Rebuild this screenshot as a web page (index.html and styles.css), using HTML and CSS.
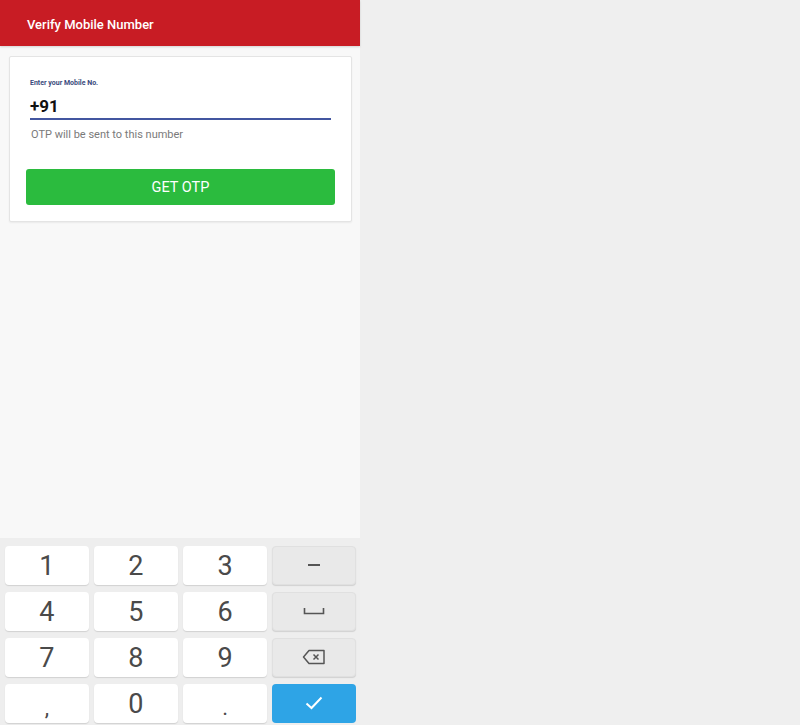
FILE: index.html
```html
<!DOCTYPE html>
<html>
<head>
<meta charset="utf-8">
<link rel="stylesheet" href="styles.css">
</head>
<body>
<div class="app">
  <header class="topbar">Verify Mobile Number</header>
  <main class="content">
    <section class="card">
      <div class="field-label">Enter your Mobile No.</div>
      <div class="field-input">+91</div>
      <div class="field-help">OTP will be sent to this number</div>
      <button class="otp-btn">GET OTP</button>
    </section>
  </main>
  <div class="keyboard">
    <div class="key">1</div>
    <div class="key">2</div>
    <div class="key">3</div>
    <div class="key fn"><span class="dash"></span></div>
    <div class="key">4</div>
    <div class="key">5</div>
    <div class="key">6</div>
    <div class="key fn">
      <svg width="22" height="8" viewBox="0 0 22 8"><path d="M1.5 1 V6.5 H20.5 V1" fill="none" stroke="#555" stroke-width="1.6"/></svg>
    </div>
    <div class="key">7</div>
    <div class="key">8</div>
    <div class="key">9</div>
    <div class="key fn">
      <svg width="24" height="16" viewBox="0 0 24 16"><path d="M7 1.5 H22 V14.5 H7 L1.5 8 Z" fill="none" stroke="#555" stroke-width="1.5" stroke-linejoin="round"/><path d="M11.5 5.5 L16.5 10.5 M16.5 5.5 L11.5 10.5" stroke="#555" stroke-width="1.5"/></svg>
    </div>
    <div class="key small">,</div>
    <div class="key">0</div>
    <div class="key small">.</div>
    <div class="key done">
      <svg width="18" height="14" viewBox="0 0 18 14"><path d="M1.5 7.5 L6.5 12 L16.5 1.5" fill="none" stroke="#fff" stroke-width="2"/></svg>
    </div>
  </div>
</div>
</body>
</html>
```

FILE: styles.css
```css
html, body {
  margin: 0;
  padding: 0;
  background: #efefef;
  font-family: Roboto, "Noto Sans", "Liberation Sans", sans-serif;
}
.app {
  width: 360px;
  height: 725px;
  display: flex;
  flex-direction: column;
  background: #f8f8f8;
}
.topbar {
  height: 46px;
  flex: 0 0 46px;
  box-sizing: border-box;
  background: #c81c24;
  color: #fff;
  font-size: 13px;
  font-weight: 500;
  padding: 17px 0 0 27px;
  box-shadow: 0 1px 2px rgba(0,0,0,0.15);
}
.content {
  flex: 1;
  padding: 10px 8px 0 9px;
}
.card {
  background: #fff;
  border: 1px solid #e4e4e4;
  border-radius: 2px;
  box-shadow: 0 1px 2px rgba(0,0,0,0.06);
  height: 166px;
  box-sizing: border-box;
  padding: 22px 16px 0 16px;
}
.field-label {
  margin-left: 4px;
  font-size: 7px;
  font-weight: 700;
  color: #3a4a7c;
  line-height: 9px;
}
.field-input {
  margin: 8px 0 0 4px;
  width: 301px;
  font-size: 17px;
  font-weight: 700;
  color: #111;
  line-height: 20px;
  padding-bottom: 2px;
  border-bottom: 2px solid #4356a0;
}
.field-help {
  margin: 8px 0 0 5px;
  font-size: 11px;
  color: #7a7a7a;
  line-height: 14px;
}
.otp-btn {
  display: block;
  margin-top: 27px;
  width: 309px;
  height: 36px;
  border: none;
  border-radius: 3px;
  background: #2bbb3e;
  color: #fff;
  font-family: Roboto, "Noto Sans", sans-serif;
  font-size: 14.5px;
  padding: 0;
}
.keyboard {
  flex: 0 0 187px;
  box-sizing: border-box;
  background: #eeeeee;
  padding: 8px 4px 0 5px;
  display: grid;
  grid-template-columns: repeat(4, 1fr);
  grid-template-rows: repeat(4, 38.5px);
  column-gap: 5.5px;
  row-gap: 7.5px;
}
.key {
  background: #fff;
  border-radius: 4px;
  box-shadow: 0 1px 1px rgba(0,0,0,0.12);
  display: flex;
  align-items: center;
  justify-content: center;
  font-size: 27px;
  font-weight: 400;
  color: #4a4a4a;
  padding-top: 2px;
  box-sizing: border-box;
}
.key.small {
  font-size: 22px;
  padding-top: 8px;
}
.key.fn {
  background: #e9e9e9;
  border: 1px solid #e0e0e0;
  padding-top: 0;
}
.key.done {
  background: #2ea4e6;
  box-shadow: none;
  padding-top: 0;
}
.dash {
  display: block;
  width: 12px;
  height: 2px;
  background: #555;
}
```
